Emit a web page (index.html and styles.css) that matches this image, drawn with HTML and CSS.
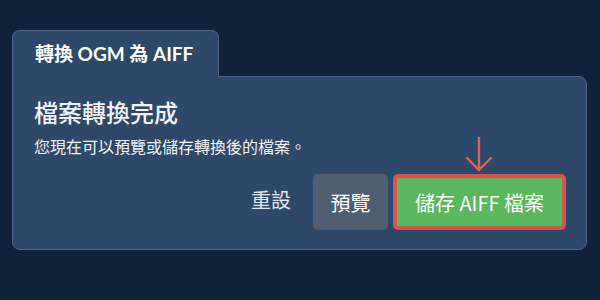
FILE: index.html
```html
<!DOCTYPE html>
<html lang="zh-Hant">
<head>
<meta charset="utf-8">
<link rel="stylesheet" href="styles.css">
</head>
<body>
<div class="page">
  <div class="tab">轉換 OGM 為 AIFF</div>
  <div class="card">
    <h1 class="title">檔案轉換完成</h1>
    <p class="desc">您現在可以預覽或儲存轉換後的檔案。</p>
    <div class="actions">
      <button class="btn btn-text">重設</button>
      <button class="btn btn-gray">預覽</button>
      <div class="save-wrap">
        <svg class="arrow" width="30" height="36" viewBox="0 0 30 36">
          <path d="M15 0 V33 M2.5 20.5 L15 33 L27.5 20.5" fill="none" stroke="#e0605a" stroke-width="2.4"/>
        </svg>
        <button class="btn btn-green">儲存 AIFF 檔案</button>
      </div>
    </div>
  </div>
</div>
</body>
</html>
```
FILE: styles.css
```css
html, body { margin: 0; padding: 0; }
body {
  width: 600px; height: 300px;
  background: #10223a;
  font-family: "Lato", "Noto Sans CJK TC", sans-serif;
  color: #ffffff;
  overflow: hidden;
}
.page { padding: 30px 13px 0 12px; }
.tab {
  position: relative; z-index: 1;
  display: inline-block;
  box-sizing: border-box;
  width: 207px; height: 47px;
  margin-bottom: -1px;
  padding: 11px 0 0 22px;
  background: #2d4868;
  border: 1px solid #4b6585;
  border-bottom: none;
  border-radius: 8px 8px 0 0;
  font-size: 19px; font-weight: 700;
  line-height: 24px;
  vertical-align: top;
}
.card {
  box-sizing: border-box;
  background: #2d4868;
  border: 1px solid #4b6585;
  border-radius: 0 8px 8px 8px;
  padding: 19px 20px 19px 21px;
}
.title {
  margin: 0;
  font-family: "Noto Sans CJK TC", sans-serif;
  font-size: 24px; font-weight: 500;
  line-height: 32px;
  color: #f2f4f7;
}
.desc {
  margin: 7px 0 0;
  font-family: "Noto Sans CJK TC", sans-serif;
  font-size: 16px; line-height: 22px;
  color: #f2f4f7;
}
.actions {
  display: flex; justify-content: flex-end; align-items: center;
  margin-top: 17px;
  gap: 5px;
}
.btn {
  font-family: "Noto Sans CJK TC", sans-serif;
  font-size: 20px;
  color: #ffffff;
  border: none;
  height: 56px;
  border-radius: 5px;
  cursor: pointer;
  padding: 0;
}
.btn-text {
  background: transparent;
  padding: 0 17px 0 0;
  color: #e4e8ee;
  margin-top: -6px;
}
.btn-gray {
  background: #4f5e70;
  width: 75px;
}
.save-wrap { position: relative; }
.arrow {
  position: absolute; left: 71px; top: -37px;
}
.btn-green {
  background: #5cb85c;
  border: 4px solid #d9534f;
  border-radius: 5px;
  width: 173px;
  display: block;
}
```
